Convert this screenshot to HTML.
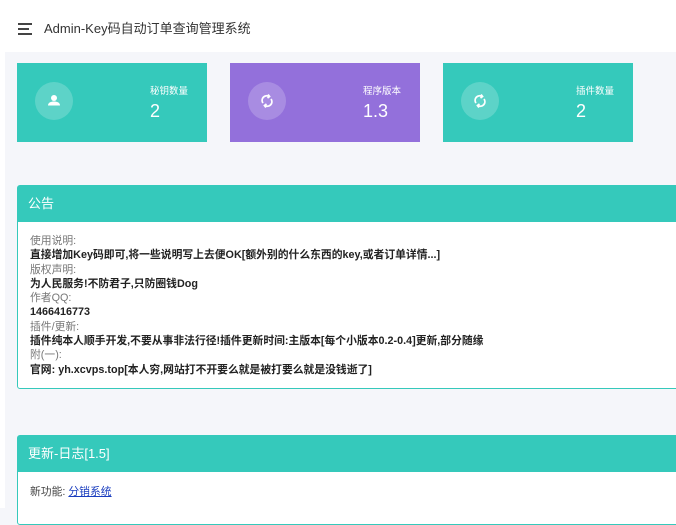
<!DOCTYPE html>
<html><head><meta charset="utf-8"><style>
*{margin:0;padding:0;box-sizing:border-box}
body{width:676px;height:508px;overflow:hidden;background:#f5f6fa;font-family:"Liberation Sans","Noto Sans CJK SC",sans-serif;position:relative}
.hdr{position:absolute;left:0;top:0;width:676px;height:52px;background:#fff}
.hdr .t{position:absolute;left:44px;top:18px;font-size:13px;color:#333}
.ham{position:absolute;left:18px;top:23px;width:14px}
.ham i{display:block;height:1.5px;background:#444;margin-bottom:3.5px}
.ham i:nth-child(2){width:11px}
.side{position:absolute;left:0;top:52px;width:5px;height:456px;background:#fff}
.card{position:absolute;top:63px;width:190px;height:79px;color:#fff}
.c1{left:17px;background:#35c9bb}.c2{left:230px;background:#9370db}.c3{left:443px;background:#35c9bb}
.circ{position:absolute;left:18px;top:19px;width:38px;height:38px;border-radius:50%;background:rgba(255,255,255,.2)}
.lbl{position:absolute;left:133px;top:20px;font-size:9.5px}
.val{position:absolute;left:133px;top:38px;font-size:18px}
.panel{position:absolute;left:17px;width:670px;border:1px solid #35c9bb;border-radius:3px;background:#fff}
.ph{background:#35c9bb;color:#fff;font-size:13px;padding:0 10px;height:36px;line-height:36px}
.pb{padding:12px 12px;font-size:10.8px;line-height:14.3px;color:#777}
.pb b{color:#222}
a{color:#1a3dbf}
</style></head><body>
<div class="hdr"><div class="ham"><i></i><i></i><i></i></div><div class="t">Admin-Key码自动订单查询管理系统</div></div>
<div class="side"></div>
<div class="card c1"><div class="circ"><svg width="38" height="38" viewBox="0 0 38 38"><circle cx="19" cy="16" r="3" fill="#fff"/><path d="M13 23.5c0-3 3-4 6-4s6 1 6 4z" fill="#fff"/></svg></div><div class="lbl">秘钥数量</div><div class="val">2</div></div>
<div class="card c2"><div class="circ"><svg width="38" height="38" viewBox="0 0 38 38" fill="none" stroke="#fff" stroke-width="1.8"><path d="M15 21a4.5 4.5 0 0 1 6-6.5M23 17a4.5 4.5 0 0 1-6 6.5"/><path d="M20 12.5l1.5 2-2 1.5M18 25.5l-1.5-2 2-1.5"/></svg></div><div class="lbl">程序版本</div><div class="val">1.3</div></div>
<div class="card c3"><div class="circ"><svg width="38" height="38" viewBox="0 0 38 38" fill="none" stroke="#fff" stroke-width="1.8"><path d="M15 21a4.5 4.5 0 0 1 6-6.5M23 17a4.5 4.5 0 0 1-6 6.5"/><path d="M20 12.5l1.5 2-2 1.5M18 25.5l-1.5-2 2-1.5"/></svg></div><div class="lbl">插件数量</div><div class="val">2</div></div>
<div class="panel" style="top:185px;height:204px"><div class="ph">公告</div><div class="pb">
使用说明:<br><b>直接增加Key码即可,将一些说明写上去便OK[额外别的什么东西的key,或者订单详情...]</b><br>
版权声明:<br><b>为人民服务!不防君子,只防圈钱Dog</b><br>
作者QQ:<br><b>1466416773</b><br>
插件/更新:<br><b>插件纯本人顺手开发,不要从事非法行径!插件更新时间:主版本[每个小版本0.2-0.4]更新,部分随缘</b><br>
附(一):<br><b>官网: yh.xcvps.top[本人穷,网站打不开要么就是被打要么就是没钱逝了]</b>
</div></div>
<div class="panel" style="top:435px;height:90px"><div class="ph">更新-日志[1.5]</div><div class="pb" style="padding-top:13px;color:#444">新功能: <a href="#">分销系统</a></div></div>
</body></html>
